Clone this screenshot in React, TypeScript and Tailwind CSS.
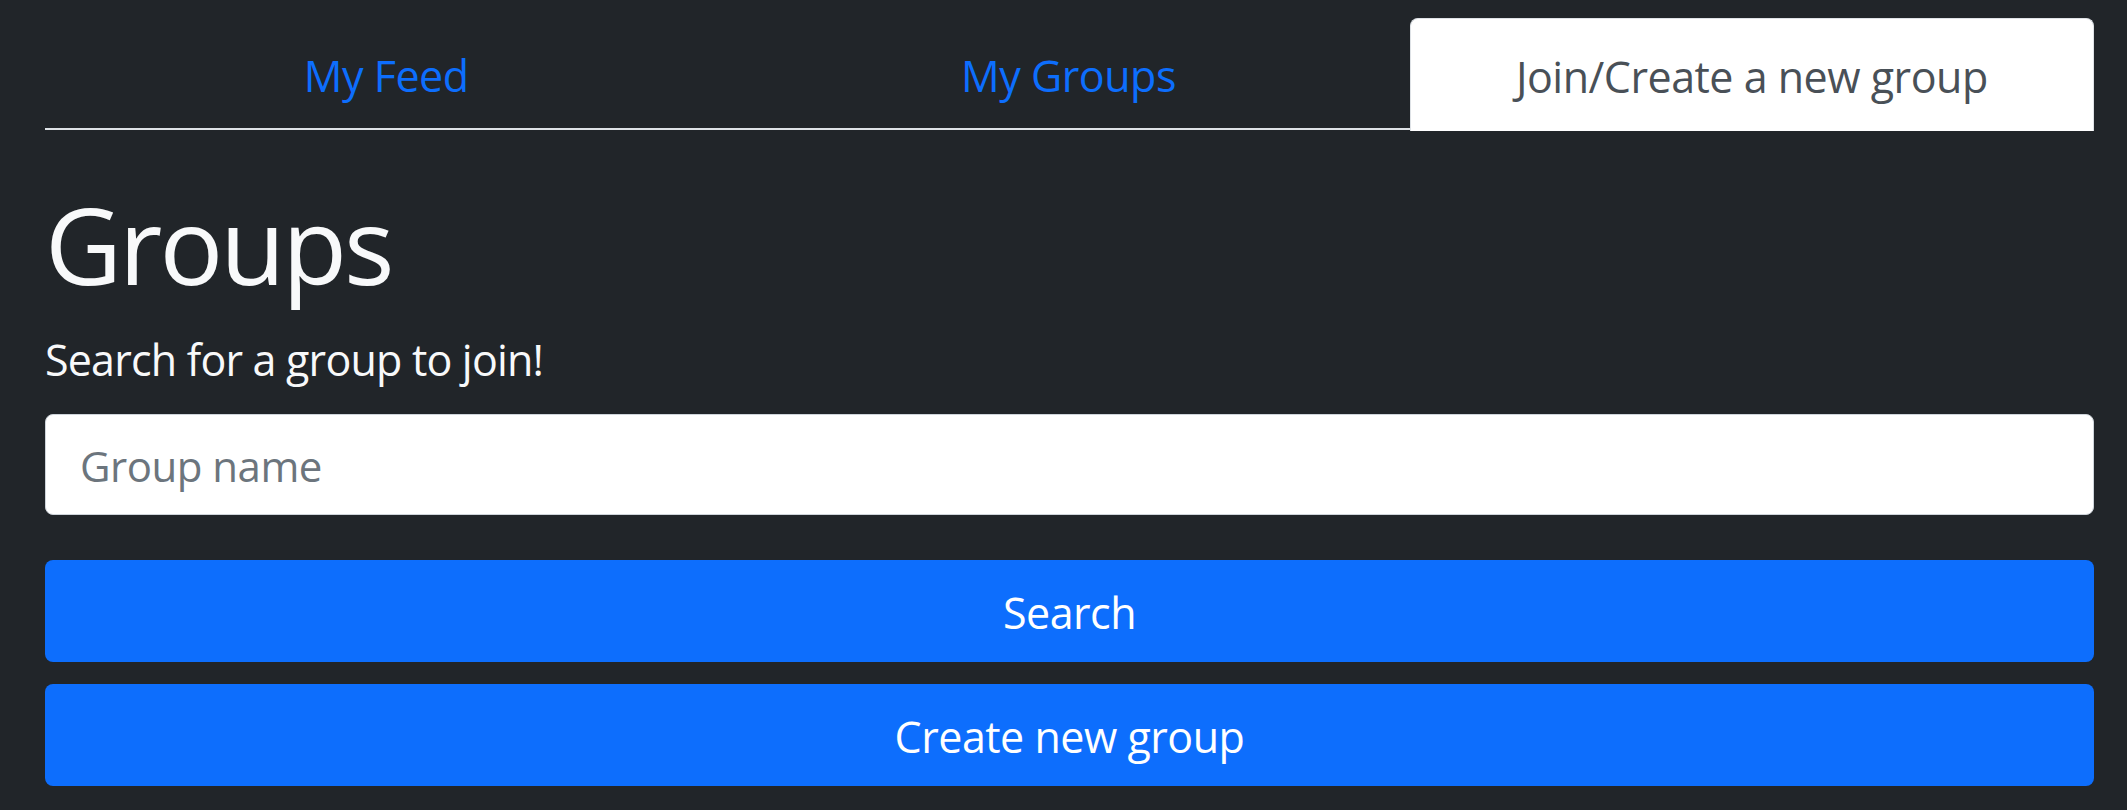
import React from "react";

const font = { fontFamily: '"Open Sans", "Noto Sans", sans-serif' };

function Tab({ label, active }: { label: string; active?: boolean }) {
    if (active) {
        return (
            <div className="flex-1 h-[113px] -mb-[3px] pt-[4px] flex items-center justify-center bg-white border border-b-0 border-[#dee2e6] rounded-t-[8px] text-[#495057] text-[43px] tracking-[-0.5px]">
                {label}
            </div>
        );
    }
    return (
        <div className="flex-1 h-[112px] -mb-[2px] pt-[4px] flex items-center justify-center text-[#0d6efd] text-[43px] tracking-[-0.5px]">
            {label}
        </div>
    );
}

export default function App() {
    return (
        <div className="min-h-screen bg-[#212529] pl-[45px] pr-[33px] pt-[18px]" style={font}>
            <div className="flex border-b-[2px] border-[#dee2e6]">
                <Tab label="My Feed" />
                <Tab label="My Groups" />
                <Tab label="Join/Create a new group" active />
            </div>

            <h1 className="mt-[54px] text-[#f8f9fa] text-[106px] font-normal tracking-[-3px] leading-[120px]">
                Groups
            </h1>

            <p className="mt-[31px] text-[#f8f9fa] text-[43px] tracking-[-0.8px] leading-[50px]">
                Search for a group to join!
            </p>

            <input
                className="mt-[29px] w-full h-[101px] bg-white border border-[#ced4da] rounded-[8px] px-[34px] pt-[2px] text-[42px] text-[#212529] placeholder:text-[#6c757d] outline-none tracking-[-0.5px]"
                placeholder="Group name"
                style={font}
            />

            <div className="mt-[45px] flex flex-col gap-[22px]">
                <button className="w-full h-[102px] pt-[5px] bg-[#0d6efd] rounded-[8px] text-white text-[43px] tracking-[-0.5px]" style={font}>
                    Search
                </button>
                <button className="w-full h-[102px] pt-[5px] bg-[#0d6efd] rounded-[8px] text-white text-[43px] tracking-[-0.5px]" style={font}>
                    Create new group
                </button>
            </div>
        </div>
    );
}
